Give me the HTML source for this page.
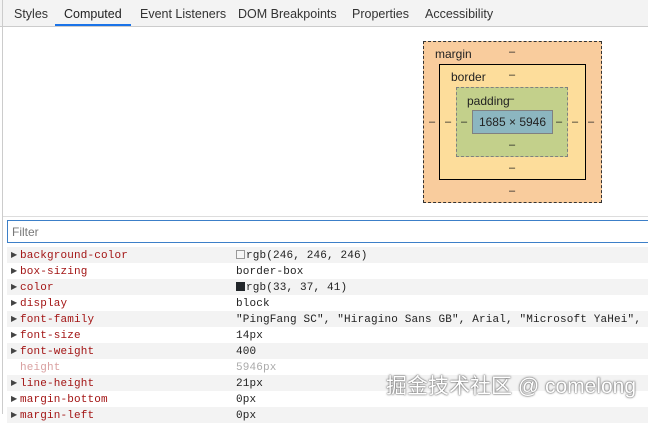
<!DOCTYPE html>
<html><head><style>
body{margin:0;width:648px;height:414px;overflow:hidden;background:#fff;font-family:"Liberation Sans","Noto Sans CJK SC",sans-serif;position:relative}
.tabs{position:absolute;left:0;top:0;width:648px;height:27px;background:#f3f3f3;border-bottom:1px solid #ccc;box-sizing:border-box}
.tab{position:absolute;top:7px;font-size:12.5px;color:#333}
.ul{position:absolute;left:55px;top:24px;width:76px;height:2px;background:#1a73e8}
.lb{position:absolute;left:2px;top:0;width:1px;height:414px;background:#ccc}
.bx{position:absolute;box-sizing:border-box;font-size:12px;color:#222}
.d{position:absolute;font-size:11px;color:#222}
.filter{position:absolute;left:7px;top:220px;width:650px;height:23px;border:1px solid #3c7fc8;box-sizing:border-box;font-size:12px;color:#777;padding:4px 4px}
.row{position:absolute;left:7px;width:641px;height:16px;font-family:"Liberation Mono",monospace;font-size:11px;letter-spacing:0.15px;line-height:18px;white-space:nowrap}
.row.g{background:#f3f3f3}
.row .a{position:absolute;left:4px;top:0;color:#444;font-size:8px}
.row .n{position:absolute;left:13px;color:#a31515}
.row .v{position:absolute;left:229px;color:#222}
.sw{display:inline-block;width:9px;height:9px;border:1px solid #999;vertical-align:-1px;margin-right:1px;box-sizing:border-box}
</style></head><body>
<div class="tabs">
<span class="tab" style="left:14px">Styles</span>
<span class="tab" style="left:64px;color:#222">Computed</span>
<span class="tab" style="left:140px">Event Listeners</span>
<span class="tab" style="left:238px">DOM Breakpoints</span>
<span class="tab" style="left:352px">Properties</span>
<span class="tab" style="left:425px">Accessibility</span>
<div class="ul"></div>
</div>
<div class="lb"></div>
<div class="bx" style="left:423px;top:41px;width:179px;height:162px;background:#f9cc9d;border:1px dashed #333"></div>
<div class="bx" style="left:439px;top:64px;width:147px;height:116px;background:#fddd9b;border:1px solid #000"></div>
<div class="bx" style="left:456px;top:87px;width:112px;height:70px;background:#c3d08b;border:1px dashed #808080"></div>
<div class="bx" style="left:472px;top:110px;width:81px;height:24px;background:#8cb6c0;border:1px solid #808080;text-align:center;line-height:23px">1685 × 5946</div>
<div class="d" style="left:435px;top:47px;font-size:12px">margin</div>
<div class="d" style="left:451px;top:70px;font-size:12px">border</div>
<div class="d" style="left:467px;top:94px;font-size:12px">padding</div>
<div class="d" style="left:509px;top:46px">–</div>
<div class="d" style="left:509px;top:69px">–</div>
<div class="d" style="left:508px;top:93px">–</div>
<div class="d" style="left:509px;top:139px">–</div>
<div class="d" style="left:509px;top:162px">–</div>
<div class="d" style="left:509px;top:185px">–</div>
<div class="d" style="left:429px;top:116px">–</div>
<div class="d" style="left:445px;top:116px">–</div>
<div class="d" style="left:461px;top:116px">–</div>
<div class="d" style="left:556px;top:116px">–</div>
<div class="d" style="left:572px;top:116px">–</div>
<div class="d" style="left:588px;top:116px">–</div>
<div style="position:absolute;left:3px;top:216px;width:645px;height:1px;background:#ddd"></div>
<div class="filter">Filter</div>
<div class="row g" style="top:247px"><span class="a">▶</span><span class="n">background-color</span><span class="v"><span class="sw" style="background:#f6f6f6"></span>rgb(246, 246, 246)</span></div>
<div class="row" style="top:263px"><span class="a">▶</span><span class="n">box-sizing</span><span class="v">border-box</span></div>
<div class="row g" style="top:279px"><span class="a">▶</span><span class="n">color</span><span class="v"><span class="sw" style="background:#212529;border-color:#212529"></span>rgb(33, 37, 41)</span></div>
<div class="row" style="top:295px"><span class="a">▶</span><span class="n">display</span><span class="v">block</span></div>
<div class="row g" style="top:311px"><span class="a">▶</span><span class="n">font-family</span><span class="v">"PingFang SC", "Hiragino Sans GB", Arial, "Microsoft YaHei", Ve</span></div>
<div class="row" style="top:327px"><span class="a">▶</span><span class="n">font-size</span><span class="v">14px</span></div>
<div class="row g" style="top:343px"><span class="a">▶</span><span class="n">font-weight</span><span class="v">400</span></div>
<div class="row" style="top:359px"><span class="n" style="color:#d9a0a0">height</span><span class="v" style="color:#aaa">5946px</span></div>
<div class="row g" style="top:375px"><span class="a">▶</span><span class="n">line-height</span><span class="v">21px</span></div>
<div class="row" style="top:391px"><span class="a">▶</span><span class="n">margin-bottom</span><span class="v">0px</span></div>
<div class="row g" style="top:407px"><span class="a">▶</span><span class="n">margin-left</span><span class="v">0px</span></div>
<div style="position:absolute;left:386px;top:370px;font-size:21px;color:#fff;text-shadow:0 0 2px #555,0 0 1px #555;white-space:nowrap">掘金技术社区 @ comelong</div>
</body></html>
